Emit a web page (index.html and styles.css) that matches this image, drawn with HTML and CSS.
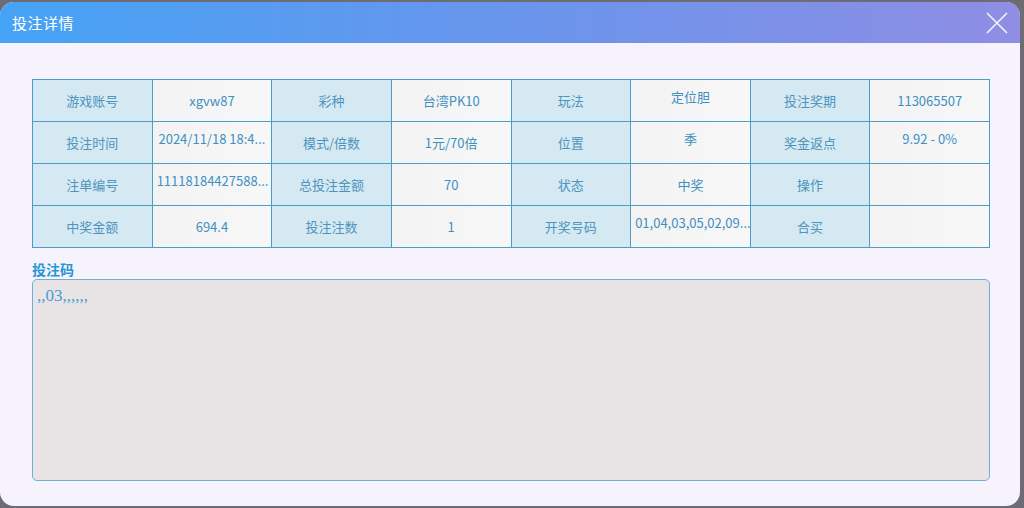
FILE: index.html
```html
<!DOCTYPE html>
<html lang="zh-CN">
<head>
    <meta charset="UTF-8">
    <meta name="viewport" content="width=device-width, initial-scale=1.0">
    <title>投注详情</title>
    <link rel="stylesheet" href="styles.css">
</head>
<body>
    <div class="dialog">
        <div class="dialog-header">
            <span class="dialog-title">投注详情</span>
            <button class="close-btn" aria-label="关闭">
                <svg width="22" height="22" viewBox="0 0 22 22">
                    <path d="M1 1 L21 21 M21 1 L1 21" stroke="#fff" stroke-width="1.6" fill="none"/>
                </svg>
            </button>
        </div>
        <div class="dialog-body">
            <table class="detail-table">
                <tr>
                    <td class="label">游戏账号</td>
                    <td class="value">xgvw87</td>
                    <td class="label">彩种</td>
                    <td class="value">台湾PK10</td>
                    <td class="label">玩法</td>
                    <td class="value up">定位胆</td>
                    <td class="label">投注奖期</td>
                    <td class="value">113065507</td>
                </tr>
                <tr>
                    <td class="label">投注时间</td>
                    <td class="value up">2024/11/18 18:4...</td>
                    <td class="label">模式/倍数</td>
                    <td class="value">1元/70倍</td>
                    <td class="label">位置</td>
                    <td class="value up">季</td>
                    <td class="label">奖金返点</td>
                    <td class="value up">9.92 - 0%</td>
                </tr>
                <tr>
                    <td class="label">注单编号</td>
                    <td class="value up">11118184427588...</td>
                    <td class="label">总投注金额</td>
                    <td class="value">70</td>
                    <td class="label">状态</td>
                    <td class="value">中奖</td>
                    <td class="label">操作</td>
                    <td class="value"></td>
                </tr>
                <tr>
                    <td class="label">中奖金额</td>
                    <td class="value">694.4</td>
                    <td class="label">投注注数</td>
                    <td class="value">1</td>
                    <td class="label">开奖号码</td>
                    <td class="value up">01,04,03,05,02,09...</td>
                    <td class="label">合买</td>
                    <td class="value"></td>
                </tr>
            </table>
            <div class="code-title">投注码</div>
            <div class="code-box">,,03,,,,,,</div>
        </div>
    </div>
</body>
</html>
```

FILE: styles.css
```css
html, body {
    margin: 0;
    height: 100%;
}

body {
    background: #6d6b74;
    font-family: "Noto Sans CJK SC", "Noto Sans", sans-serif;
    overflow: hidden;
}

.dialog {
    width: 1020px;
    height: 504px;
    margin-top: 2px;
    background: #f6f3fd;
    border-radius: 14px;
    overflow: hidden;
    display: flex;
    flex-direction: column;
}

.dialog-header {
    height: 41px;
    flex-shrink: 0;
    background: linear-gradient(90deg, #45a3f5 0%, #6995ec 50%, #8f8de4 100%);
    display: flex;
    align-items: center;
    justify-content: space-between;
    padding: 0 12px 0 12px;
}

.dialog-title {
    color: #fff;
    font-size: 15px;
    letter-spacing: 0.5px;
}

.close-btn {
    background: none;
    border: none;
    padding: 0;
    margin-top: 1px;
    width: 22px;
    height: 22px;
    cursor: pointer;
    opacity: 0.9;
}

.dialog-body {
    flex: 1;
    padding: 36px 30px 25px 32px;
    display: flex;
    flex-direction: column;
}

.detail-table {
    width: 958px;
    border-collapse: collapse;
    table-layout: fixed;
}

.detail-table td {
    height: 42px;
    box-sizing: border-box;
    border: 1px solid #4a9dc8;
    text-align: center;
    font-size: 13px;
    line-height: 16px;
    color: #4090c0;
    white-space: nowrap;
    overflow: hidden;
    padding: 0 4px;
}

.detail-table .label {
    background: #d4e9f2;
    color: #4f94be;
}

.detail-table .value {
    background: linear-gradient(90deg, #f3f3f3, #f7f7f8);
}

.detail-table .up {
    vertical-align: top;
    padding-top: 9px;
}

.code-title {
    margin-top: 13px;
    font-size: 14px;
    font-weight: bold;
    color: #2596d6;
    line-height: 17px;
}

.code-box {
    flex: 1;
    margin-top: 1px;
    background: #e8e4e6;
    border: 1px solid #6cb1d2;
    border-radius: 5px;
    padding: 6px 4px;
    font-family: "Liberation Serif", serif;
    font-size: 17px;
    color: #4a9cd2;
}
```
